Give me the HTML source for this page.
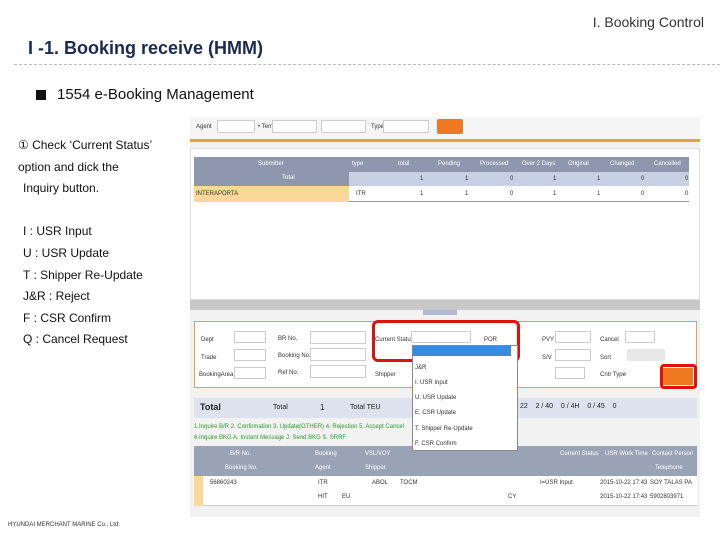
<!DOCTYPE html>
<html><head><style>
*{margin:0;padding:0;box-sizing:border-box}
body{width:720px;height:540px;background:#fff;font-family:"Liberation Sans",sans-serif;position:relative;overflow:hidden}
.a{position:absolute}
.t{font-size:12px;color:#111}
.s{font-size:6px;color:#333;white-space:nowrap}
.w{font-size:6px;color:#fff;white-space:nowrap}
.in{background:#fff;border:1px solid #ccc}
</style></head><body>
<div class="a" style="right:16px;top:14px;font-size:14px;color:#333">I. Booking Control</div>
<div class="a" style="left:28px;top:38px;font-size:18px;font-weight:bold;color:#1a2a50">I -1. Booking receive (HMM)</div>
<div class="a" style="left:14px;top:64px;width:706px;border-top:1px dashed #bbb"></div>
<div class="a" style="left:36px;top:90px;width:10px;height:10px;background:#111"></div>
<div class="a" style="left:57px;top:86px;font-size:15px;color:#111">1554 e-Booking Management</div>
<div class="a t" style="left:18px;top:138px">① Check ‘Current Status’</div>
<div class="a t" style="left:18px;top:160px">option and dick the</div>
<div class="a t" style="left:23px;top:181px">Inquiry button.</div>
<div class="a t" style="left:23px;top:224px">I : USR Input</div>
<div class="a t" style="left:23px;top:246px">U : USR Update</div>
<div class="a t" style="left:23px;top:268px">T : Shipper Re-Update</div>
<div class="a t" style="left:23px;top:289px">J&amp;R : Reject</div>
<div class="a t" style="left:23px;top:311px">F : CSR Confirm</div>
<div class="a t" style="left:23px;top:332px">Q : Cancel Request</div>
<div class="a" style="left:8px;top:522px;font-size:6px;color:#333">HYUNDAI MERCHANT MARINE Co., Ltd.</div>

<!-- top screenshot -->
<div class="a" style="left:190px;top:117px;width:510px;height:400px;background:#f2f2f2"></div>
<div class="a" style="left:190px;top:117px;width:510px;height:25px;background:#f5f5f5;border-bottom:3px solid #e8a040"></div>
<div class="a s" style="left:196px;top:124px">Agent</div>
<div class="a in" style="left:217px;top:120px;width:38px;height:13px"></div>
<div class="a s" style="left:258px;top:124px">• Term</div>
<div class="a in" style="left:272px;top:120px;width:45px;height:13px"></div>
<div class="a in" style="left:321px;top:120px;width:45px;height:13px"></div>
<div class="a s" style="left:371px;top:124px">Type</div>
<div class="a in" style="left:383px;top:120px;width:46px;height:13px"></div>
<div class="a" style="left:437px;top:119px;width:26px;height:15px;background:#f07820;border-radius:2px"></div>
<div class="a" style="left:190px;top:148px;width:510px;height:152px;background:#fff;border:1px solid #ddd"></div>
<div class="a" style="left:194px;top:157px;width:495px;height:15px;background:#8e97ad"></div>
<div class="a w" style="left:258px;top:161px">Submitter</div><div class="a w" style="left:352px;top:161px">type</div><div class="a w" style="left:398px;top:161px">total</div><div class="a w" style="left:438px;top:161px">Pending</div><div class="a w" style="left:480px;top:161px">Processed</div><div class="a w" style="left:522px;top:161px">Over 2 Days</div><div class="a w" style="left:568px;top:161px">Original</div><div class="a w" style="left:610px;top:161px">Changed</div><div class="a w" style="left:654px;top:161px">Cancelled</div>
<div class="a" style="left:194px;top:172px;width:495px;height:14px;background:#c8d0e4"></div>
<div class="a" style="left:194px;top:172px;width:155px;height:14px;background:#8e97ad"></div>
<div class="a w" style="left:282px;top:175px">Total</div>
<div class="a" style="left:194px;top:186px;width:495px;height:16px;background:#fff;border-bottom:1px solid #999"></div>
<div class="a" style="left:194px;top:186px;width:155px;height:16px;background:#fcd898"></div>
<div class="a s" style="left:196px;top:191px">INTERAPORTA</div>
<div class="a s" style="left:356px;top:191px">ITR</div>
<div class="a s" style="left:420px;top:176px">1</div><div class="a s" style="left:465px;top:176px">1</div><div class="a s" style="left:510px;top:176px">0</div><div class="a s" style="left:553px;top:176px">1</div><div class="a s" style="left:597px;top:176px">1</div><div class="a s" style="left:641px;top:176px">0</div><div class="a s" style="left:685px;top:176px">0</div>
<div class="a s" style="left:420px;top:191px">1</div><div class="a s" style="left:465px;top:191px">1</div><div class="a s" style="left:510px;top:191px">0</div><div class="a s" style="left:553px;top:191px">1</div><div class="a s" style="left:597px;top:191px">1</div><div class="a s" style="left:641px;top:191px">0</div><div class="a s" style="left:685px;top:191px">0</div>
<div class="a" style="left:190px;top:300px;width:510px;height:10px;background:#c8c8c8"></div>
<div class="a" style="left:423px;top:310px;width:34px;height:5px;background:#b0b8d8"></div>

<!-- filter panel -->
<div class="a" style="left:194px;top:321px;width:503px;height:67px;background:#fff;border:1px solid #e8a040"></div>
<div class="a s" style="left:201px;top:337px">Dept</div><div class="a s" style="left:201px;top:355px">Trade</div><div class="a s" style="left:199px;top:372px">BookingArea</div>
<div class="a in" style="left:234px;top:331px;width:32px;height:12px"></div>
<div class="a in" style="left:234px;top:349px;width:32px;height:12px"></div>
<div class="a in" style="left:234px;top:367px;width:32px;height:12px"></div>
<div class="a s" style="left:278px;top:336px">BR No.</div><div class="a s" style="left:278px;top:353px">Booking No.</div><div class="a s" style="left:278px;top:370px">Ref No.</div>
<div class="a in" style="left:310px;top:331px;width:56px;height:13px"></div>
<div class="a in" style="left:310px;top:348px;width:56px;height:13px"></div>
<div class="a in" style="left:310px;top:365px;width:56px;height:13px"></div>
<div class="a s" style="left:375px;top:337px">Current Status</div><div class="a s" style="left:375px;top:372px">Shipper</div>
<div class="a in" style="left:411px;top:331px;width:60px;height:12px"></div>
<div class="a s" style="left:484px;top:337px">POR</div>
<div class="a s" style="left:542px;top:337px">PVY</div><div class="a s" style="left:542px;top:355px">S/V</div>
<div class="a in" style="left:555px;top:331px;width:36px;height:12px"></div>
<div class="a in" style="left:555px;top:349px;width:36px;height:12px"></div>
<div class="a in" style="left:555px;top:367px;width:30px;height:12px"></div>
<div class="a s" style="left:600px;top:337px">Cancel</div><div class="a s" style="left:600px;top:355px">Sort</div><div class="a s" style="left:600px;top:372px">Cntr Type</div>
<div class="a in" style="left:625px;top:331px;width:30px;height:12px"></div>
<div class="a" style="left:627px;top:349px;width:38px;height:12px;background:#e8e8e8"></div>
<div class="a" style="left:663px;top:368px;width:30px;height:17px;background:#f07820"></div>
<div class="a" style="left:372px;top:320px;width:148px;height:42px;border:3px solid #e01010;border-radius:6px"></div>
<div class="a" style="left:660px;top:364px;width:37px;height:25px;border:3px solid #e01010;border-radius:4px"></div>

<!-- totals -->
<div class="a" style="left:194px;top:398px;width:503px;height:20px;background:#dde2ee"></div>
<div class="a" style="left:200px;top:402px;font-size:9px;font-weight:bold;color:#222">Total</div>
<div class="a" style="left:273px;top:404px;font-size:7px;color:#222">Total</div>
<div class="a" style="left:320px;top:403px;font-size:8px;color:#222">1</div>
<div class="a" style="left:350px;top:404px;font-size:7px;color:#222">Total TEU</div>
<div class="a" style="left:520px;top:403px;font-size:7px;color:#222;white-space:pre">22    2 / 40    0 / 4H    0 / 45    0</div>
<div class="a s" style="left:194px;top:424px;color:#2a9a2a">1.Inquire B/R  2. Confirmation  3. Update(OTHER)  4. Rejection  5. Accept Cancel</div>
<div class="a s" style="left:194px;top:435px;color:#2a9a2a">6.Inquire BKG  A. Instant Message  J. Send BKG  S. SRRF</div>
<div class="a" style="left:194px;top:446px;width:503px;height:30px;background:#9aa2b6"></div>
<div class="a w" style="left:230px;top:451px">B/R No.</div><div class="a w" style="left:225px;top:465px">Booking No.</div><div class="a w" style="left:315px;top:451px">Booking</div><div class="a w" style="left:315px;top:465px">Agent</div><div class="a w" style="left:365px;top:451px">VSL/VOY</div><div class="a w" style="left:365px;top:465px">Shipper</div><div class="a w" style="left:560px;top:451px">Current Status</div><div class="a w" style="left:605px;top:451px">USR Work Time</div><div class="a w" style="left:652px;top:451px">Contact Person</div><div class="a w" style="left:655px;top:465px">Telephone</div>
<div class="a" style="left:194px;top:476px;width:503px;height:30px;background:#fff;border-bottom:1px solid #ccc"></div>
<div class="a" style="left:194px;top:476px;width:9px;height:30px;background:#fcd898"></div>
<div class="a s" style="left:600px;top:480px">2015-10-22 17:43</div>
<div class="a s" style="left:600px;top:494px">2015-10-22 17:43</div>
<div class="a s" style="left:210px;top:480px">56860243</div>
<div class="a s" style="left:318px;top:480px">ITR</div><div class="a s" style="left:318px;top:494px">HIT</div><div class="a s" style="left:342px;top:494px">EU</div>
<div class="a s" style="left:372px;top:480px">ABOL</div><div class="a s" style="left:400px;top:480px">TOCM</div>
<div class="a s" style="left:540px;top:480px">I=USR Input</div><div class="a s" style="left:508px;top:494px">CY</div>
<div class="a s" style="left:650px;top:480px">SOY TALAS PA</div><div class="a s" style="left:650px;top:494px">5902803971</div>

<!-- dropdown -->
<div class="a" style="left:412px;top:345px;width:106px;height:106px;background:#fff;border:1px solid #888"></div>
<div class="a" style="left:413px;top:346px;width:98px;height:10px;background:#3a8ae0"></div>
<div class="a s" style="left:415px;top:365px">J&amp;R</div>
<div class="a s" style="left:415px;top:380px">I. USR Input</div>
<div class="a s" style="left:415px;top:395px">U. USR Update</div>
<div class="a s" style="left:415px;top:410px">E. CSR Update</div>
<div class="a s" style="left:415px;top:426px">T. Shipper Re-Update</div>
<div class="a s" style="left:415px;top:441px">F. CSR Confirm</div>
</body></html>
